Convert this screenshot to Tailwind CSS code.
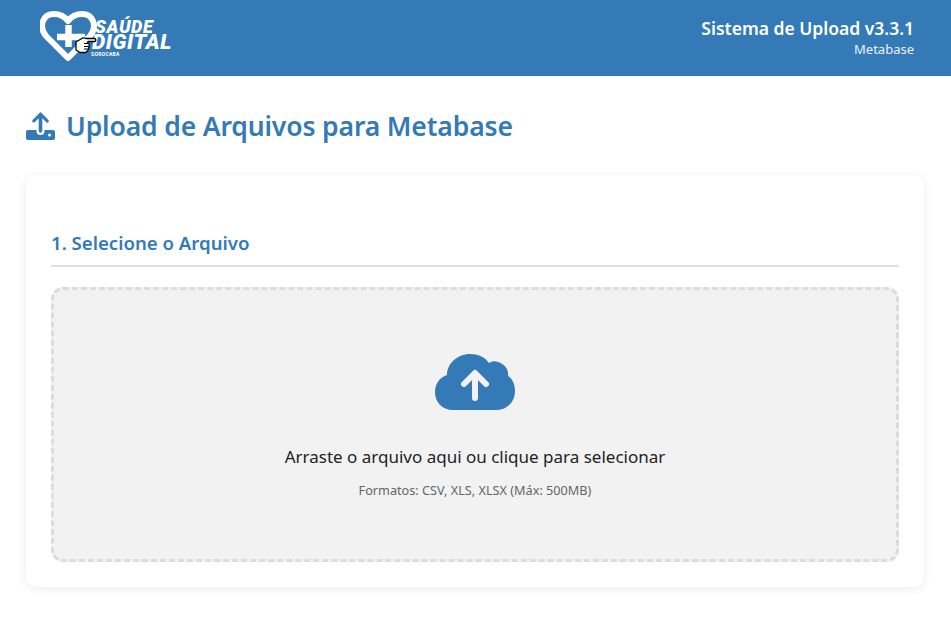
<!DOCTYPE html>
<html lang="pt-BR">
<head>
<meta charset="utf-8">
<title>Upload</title>
<script src="https://cdn.jsdelivr.net/npm/@tailwindcss/browser@4"></script>
</head>
<body class="bg-white font-['Noto_Sans','Open_Sans',sans-serif] h-[637px] overflow-hidden">
<header class="h-[76px] bg-[#337ab7] flex items-center justify-between pl-[40px] pr-[37px]">
  <div class="relative w-[135px] h-[76px]">
    <svg class="absolute left-0 top-[9px]" width="58" height="54" viewBox="0 0 58 54">
      <path d="M28 49 L6 27 C-2 17 3 5 14 5 C20 5 25 8 28 12 C31 8 36 5 42 5 C53 5 58 17 50 27 Z" fill="none" stroke="#fff" stroke-width="6" stroke-linejoin="round"/>
      <path d="M17 28 H45 M28.500 16 V38" stroke="#fff" stroke-width="6.500" fill="none"/>
    </svg>
    <div class="absolute left-[55px] top-[19px] font-['Roboto',sans-serif] font-black italic text-white text-[18px] leading-[15px] tracking-[0.6px]">SAÚDE</div>
    <div class="absolute left-[52px] top-[34px] font-['Roboto',sans-serif] font-black italic text-white text-[21px] leading-[17px] tracking-[0.6px]">DIGITAL</div>
    <div class="absolute left-[51px] top-[51px] font-['Roboto',sans-serif] font-bold text-white text-[5px] leading-[6px] tracking-[0.3px]">SOROCABA</div>
    <svg class="absolute left-[35px] top-[36px]" width="22" height="18" viewBox="0 0 22 18">
      <path d="M1 6 L6 3 Q9 1 11 2.500 H20 Q21.500 4 20 5.500 H13 L12.500 7 L14 8 Q15 10 13.500 10.500 Q14.500 12 13 13 Q13.500 15 11.500 15.500 Q11 17 9 16.500 H5 L1 14 Z" fill="#fff" stroke="#000" stroke-width="1.300" stroke-linejoin="round"/>
      <path d="M9 7.500 H13 M9 10.500 H13.500 M9 13 H12.500" stroke="#000" stroke-width="1" fill="none"/>
    </svg>
  </div>
  <div class="text-right text-white -mt-[2px]">
    <div class="text-[17.500px] leading-[24px] font-semibold">Sistema de Upload v3.3.1</div>
    <div class="text-[13px] leading-[18px] text-white/90">Metabase</div>
  </div>
</header>
<main class="pl-[26px] pr-[27px] pt-[30px]">
  <h1 class="flex items-center gap-[11px] h-[40px] text-[#337ab7] text-[26.500px] font-semibold tracking-[-0.14px] leading-[40px]">
    <svg width="29" height="28" viewBox="0 0 29 28" fill="#337ab7">
      <path d="M14.500 0 L22.500 8 Q23.500 9.500 22 10.500 Q20.800 11 20 10 L16.300 6.300 V19 Q16.300 20.800 14.500 20.800 Q12.700 20.800 12.700 19 V6.300 L9 10 Q8 11 6.800 10.300 Q5.600 9.300 6.500 8 Z"/>
      <path d="M2 18 H10.500 V19 Q10.500 23 14.500 23 Q18.500 23 18.500 19 V18 H27 Q29 18 29 20 V26 Q29 28 27 28 H2 Q0 28 0 26 V20 Q0 18 2 18 Z M23.500 21.500 A1.500 1.500 0 1 0 23.500 24.500 A1.500 1.500 0 1 0 23.500 21.500 Z" fill-rule="evenodd"/>
    </svg>
    <span>Upload de Arquivos para Metabase</span>
  </h1>
  <section class="mt-[29px] h-[412px] bg-white rounded-[10px] shadow-[0_2px_10px_rgba(0,0,0,0.08)] px-[25px] pt-[54px]">
    <h2 class="text-[#337ab7] text-[18.600px] leading-[27px] font-semibold pb-[9px] border-b-2 border-[#e0e0e0]">1. Selecione o Arquivo</h2>
    <div class="mt-[20px] h-[275px] bg-[#f2f2f2] border-[3px] border-dashed border-[#dcdcdc] rounded-[12px] flex flex-col items-center pt-[64px]">
      <svg width="80" height="56" viewBox="0 0 80 56">
        <path fill="#337ab7" d="M18 56 C7 56 0 48 0 38 C0 30 4 24 12 21 C12 9 23 0 35 0 C43 0 50 3 54 9 C57 7 60 7 63 8 C70 10 74 16 73 22 C77 24 80 30 80 37 C80 48 72 56 62 56 Z"/>
        <path d="M40 44 V20 M29 30 L40 19 L51 30" fill="none" stroke="#f2f2f2" stroke-width="6" stroke-linecap="round" stroke-linejoin="round"/>
      </svg>
      <p class="mt-[35px] text-[17px] leading-[24px] text-[#222]">Arraste o arquivo aqui ou clique para selecionar</p>
      <p class="mt-[12px] text-[12.700px] leading-[18px] text-[#666]">Formatos: CSV, XLS, XLSX (Máx: 500MB)</p>
    </div>
  </section>
</main>
</body>
</html>
